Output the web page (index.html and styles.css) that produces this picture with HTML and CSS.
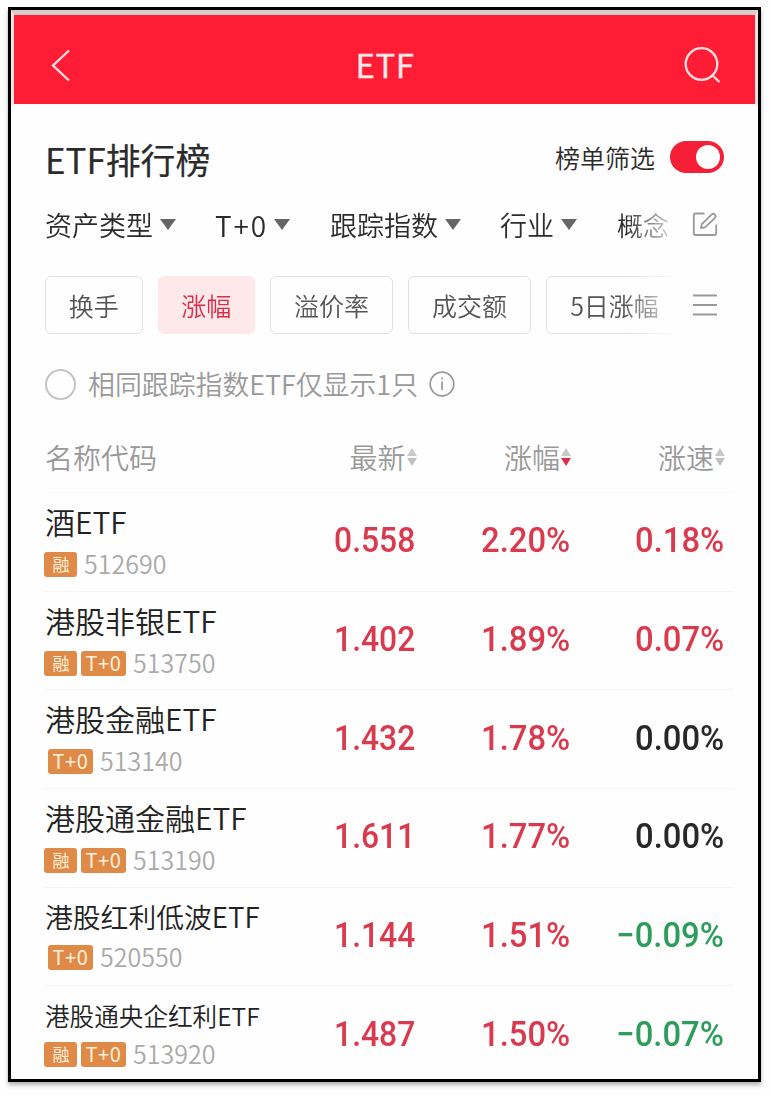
FILE: index.html
```
<!DOCTYPE html>
<html lang="zh-CN">
<head>
<meta charset="utf-8">
<title>ETF排行榜</title>
<link rel="stylesheet" href="styles.css">
</head>
<body>
<main class="frame">
  <header class="topbar">
    <svg class="back" width="24" height="36" viewBox="0 0 24 36"><path d="M20 3.500 4 18.500 20 33.500"/></svg>
    <h1 class="topbar-title">ETF</h1>
    <svg class="search" width="40" height="40" viewBox="0 0 40 40"><circle cx="18.500" cy="18" r="15.800"/><path d="M29 29 36.500 36"/></svg>
  </header>
  <section class="heading">
    <h2 class="heading-title">ETF排行榜</h2>
    <div class="heading-filter"><span>榜单筛选</span><span class="switch"><span class="knob"></span></span></div>
  </section>
  <nav class="filters">
    <div class="filter-list">
      <span class="filter f1">资产类型<i class="caret"></i></span>
      <span class="filter f2"><span class="latin">T+0</span><i class="caret"></i></span>
      <span class="filter f3">跟踪指数<i class="caret"></i></span>
      <span class="filter f4">行业<i class="caret"></i></span>
      <span class="filter fade-word">概念</span>
    </div>
    <svg class="tool" width="26" height="26" viewBox="0 0 26 26"><path d="M12.500 1.500H3.500Q1.800 1.500 1.800 3.200V21.300Q1.800 23 3.500 23H22.500Q24.200 23 24.200 21.300V12.500"/><path d="M9 16 9.800 12.200 19.800 2.400Q21.300 1 22.900 2.600T23 5.800L13 15.300Z"/></svg>
  </nav>
  <nav class="tabs">
    <div class="tab-list">
      <span class="tab">换手</span>
      <span class="tab active">涨幅</span>
      <span class="tab wide">溢价率</span>
      <span class="tab wide">成交额</span>
      <span class="tab last">5日涨幅</span>
    </div>
    <svg class="tool" width="26" height="26" viewBox="0 0 26 26"><path d="M1 3.500H25M1 13H25M1 22.500H25"/></svg>
  </nav>
  <div class="option">
    <span class="radio"></span>
    <span class="option-text">相同跟踪指数ETF仅显示1只</span>
    <svg class="info" width="26" height="26" viewBox="0 0 26 26"><circle cx="13" cy="13" r="11.800"/><path d="M13 10.500V19M13 6.500V8.500"/></svg>
  </div>
  <section class="table">
    <div class="row head">
      <span class="col-name">名称代码</span>
      <span class="col">最新<i class="sort"></i></span>
      <span class="col">涨幅<i class="sort down"></i></span>
      <span class="col">涨速<i class="sort"></i></span>
    </div>
    <div class="row">
      <div class="col-name"><div class="name">酒ETF</div><div class="meta"><b class="tag rong">融</b><span class="code">512690</span></div></div>
      <span class="num">0.558</span><span class="num pct">2.20%</span><span class="num pct">0.18%</span>
    </div>
    <div class="row">
      <div class="col-name"><div class="name">港股非银ETF</div><div class="meta"><b class="tag rong">融</b><b class="tag">T+0</b><span class="code">513750</span></div></div>
      <span class="num">1.402</span><span class="num pct">1.89%</span><span class="num pct">0.07%</span>
    </div>
    <div class="row">
      <div class="col-name"><div class="name">港股金融ETF</div><div class="meta single"><b class="tag">T+0</b><span class="code">513140</span></div></div>
      <span class="num">1.432</span><span class="num pct">1.78%</span><span class="num pct flat">0.00%</span>
    </div>
    <div class="row">
      <div class="col-name"><div class="name">港股通金融ETF</div><div class="meta"><b class="tag rong">融</b><b class="tag">T+0</b><span class="code">513190</span></div></div>
      <span class="num">1.611</span><span class="num pct">1.77%</span><span class="num pct flat">0.00%</span>
    </div>
    <div class="row">
      <div class="col-name"><div class="name medium">港股红利低波ETF</div><div class="meta single"><b class="tag">T+0</b><span class="code">520550</span></div></div>
      <span class="num">1.144</span><span class="num pct">1.51%</span><span class="num pct fall">−0.09%</span>
    </div>
    <div class="row">
      <div class="col-name"><div class="name small">港股通央企红利ETF</div><div class="meta"><b class="tag rong">融</b><b class="tag">T+0</b><span class="code">513920</span></div></div>
      <span class="num">1.487</span><span class="num pct">1.50%</span><span class="num pct fall">−0.07%</span>
    </div>
  </section>
</main>
</body>
</html>
```
FILE: styles.css
```
* { box-sizing: border-box; }
body {
  margin: 0;
  padding: 7px 0 0 8px;
  height: 1096px;
  overflow: hidden;
  background: #fefefe;
  font-family: "Noto Sans CJK SC", sans-serif;
  font-weight: 350;
  color: #2b2b2b;
}
h1, h2 { margin: 0; font-weight: 400; }
svg { display: block; flex: none; fill: none; }
.frame {
  width: 753px;
  height: 1075px;
  border: 3px solid #000;
  background: #fefefe;
  box-shadow: 0 3px 4px rgba(0, 0, 0, .3);
  overflow: hidden;
}
.topbar {
  display: grid;
  grid-template-columns: 60px 1fr 60px;
  align-items: center;
  height: 97px;
  padding: 2px 32px 0 31px;
  border: solid #fbe3e3;
  border-width: 5px 3px 3px;
  border-top-color: #d9cccc;
  border-bottom-color: #fefefe;
  background: #ff1d36;
  background-clip: padding-box;
}
.topbar-title {
  padding: 6px 0 0 2px;
  text-align: center;
  color: #ffe9ea;
  font-size: 33px;
  line-height: 44px;
  letter-spacing: .6px;
  -webkit-text-stroke: .3px #ffe9ea;
}
.back, .search { stroke: #ffe0e0; stroke-width: 2.3; margin-top: 8px; }
.back { margin-left: 4px; }
.search { justify-self: end; margin-top: 10px; }
.heading {
  display: flex;
  justify-content: space-between;
  align-items: center;
  height: 81px;
  padding: 19px 34px 0 34px;
}
.heading-title { font-size: 34.9px; line-height: 50px; padding-top: 3px; -webkit-text-stroke: .2px #2b2b2b; }
.heading-filter { display: flex; align-items: center; gap: 15px; font-size: 25px; line-height: 40px; }
.switch { display: flex; justify-content: flex-end; width: 54px; height: 32px; padding: 4px; border-radius: 16px; background: #f51f38; }
.knob { width: 24px; height: 24px; border-radius: 50%; background: #fff; }
.filters, .tabs { display: flex; align-items: center; justify-content: space-between; padding: 0 40px 0 34px; }
.filters { height: 68px; padding-top: 5px; }
.filter-list, .tab-list {
  display: flex;
  width: 626px;
  overflow: hidden;
  -webkit-mask-image: linear-gradient(90deg, #000 580px, transparent 636px);
  mask-image: linear-gradient(90deg, #000 580px, transparent 636px);
}
.filter { display: flex; align-items: center; flex: none; font-size: 27px; line-height: 44px; }
.latin { font-size: 28px; letter-spacing: 1.9px; }
.f1 { width: 170px; }
.f2 { width: 115px; }
.f3 { width: 170px; }
.f4 { width: 117px; }
.fade-word { font-size: 26px; }
.caret { margin-left: 7px; border: solid transparent; border-width: 11px 8px 0; border-top-color: #666; }
.f2 .caret { margin-left: 6px; }
.tool { stroke: #999; stroke-width: 1.8; stroke-linejoin: round; }
.tabs { height: 78px; padding-top: 19px; }
.tab-list { gap: 15px; }
.tab {
  flex: none;
  width: 97.500px;
  height: 58px;
  border: 1px solid #e0e0e0;
  border-radius: 6px;
  text-align: center;
  font-size: 25px;
  line-height: 57px;
  color: #555;
}
.tab.active { border-color: #fee8ea; background: #fee8ea; color: #d92e49; }
.tab.wide { width: 123px; }
.tab.last { width: 137px; }
.option { display: flex; align-items: center; height: 100px; padding-left: 34px; color: #999; }
.radio { width: 31px; height: 31px; border: 2px solid #c4c4c4; border-radius: 50%; }
.option-text { margin-left: 12px; font-size: 26.9px; line-height: 40px; }
.info { margin-left: 11px; stroke: #999; stroke-width: 1.7; }
.table { padding: 0 24px 0 34px; }
.row {
  display: grid;
  grid-template-columns: 217px 153.500px 154.500px 154px;
  align-items: center;
  height: 98.7px;
  border-bottom: 1px solid #f4f4f4;
}
.row:last-child { border-bottom: 0; }
.head { height: 59px; padding-bottom: 12px; color: #999; font-size: 28px; border-bottom-color: #fafafa; }
.col { display: flex; justify-content: flex-end; align-items: center; }
.sort { display: grid; gap: 2px; width: 10px; margin: 0 -1px 1px 1px; }
.sort::before, .sort::after { content: ""; border: solid transparent; border-width: 0 5px 8px; border-bottom-color: #c8c8c8; }
.sort::after { border-width: 8px 5px 0; border-top-color: #c0c0c0; }
.sort.down::after { border-top-color: #d92e49; }
.name { margin-top: -1px; font-size: 30px; line-height: 42px; white-space: nowrap; color: #222; }
.name.medium { font-size: 27.8px; }
.name.small { font-size: 24.6px; }
.meta { display: flex; align-items: center; height: 41px; margin-left: -1px; }
.meta.single { margin-left: 3px; }
.medium + .meta { margin-top: -2px; margin-bottom: 2px; }
.small + .meta { margin-top: -4px; margin-bottom: 4px; }
.tag { width: 45px; height: 25px; margin: 4px 4px 0 0; border-radius: 3px; background: #e08a48; color: #fff1dc; font-size: 20px; font-weight: 400; line-height: 24px; text-align: center; letter-spacing: .6px; }
.rong { width: 33px; padding-left: 1px; font-size: 17px; letter-spacing: 0; }
.code { margin-left: 3px; padding-top: 1px; color: #aaa; font-size: 25px; }
.num {
  justify-self: end;
  margin-top: -2px;
  font-family: Roboto, sans-serif;
  font-size: 35px;
  font-weight: 500;
  white-space: nowrap;
  color: #d93a4d;
  transform: scaleX(.91);
  transform-origin: right;
}
.pct { transform: scaleX(.937); }
.flat { color: #282828; }
.fall { color: #2e9d5b; }
```
